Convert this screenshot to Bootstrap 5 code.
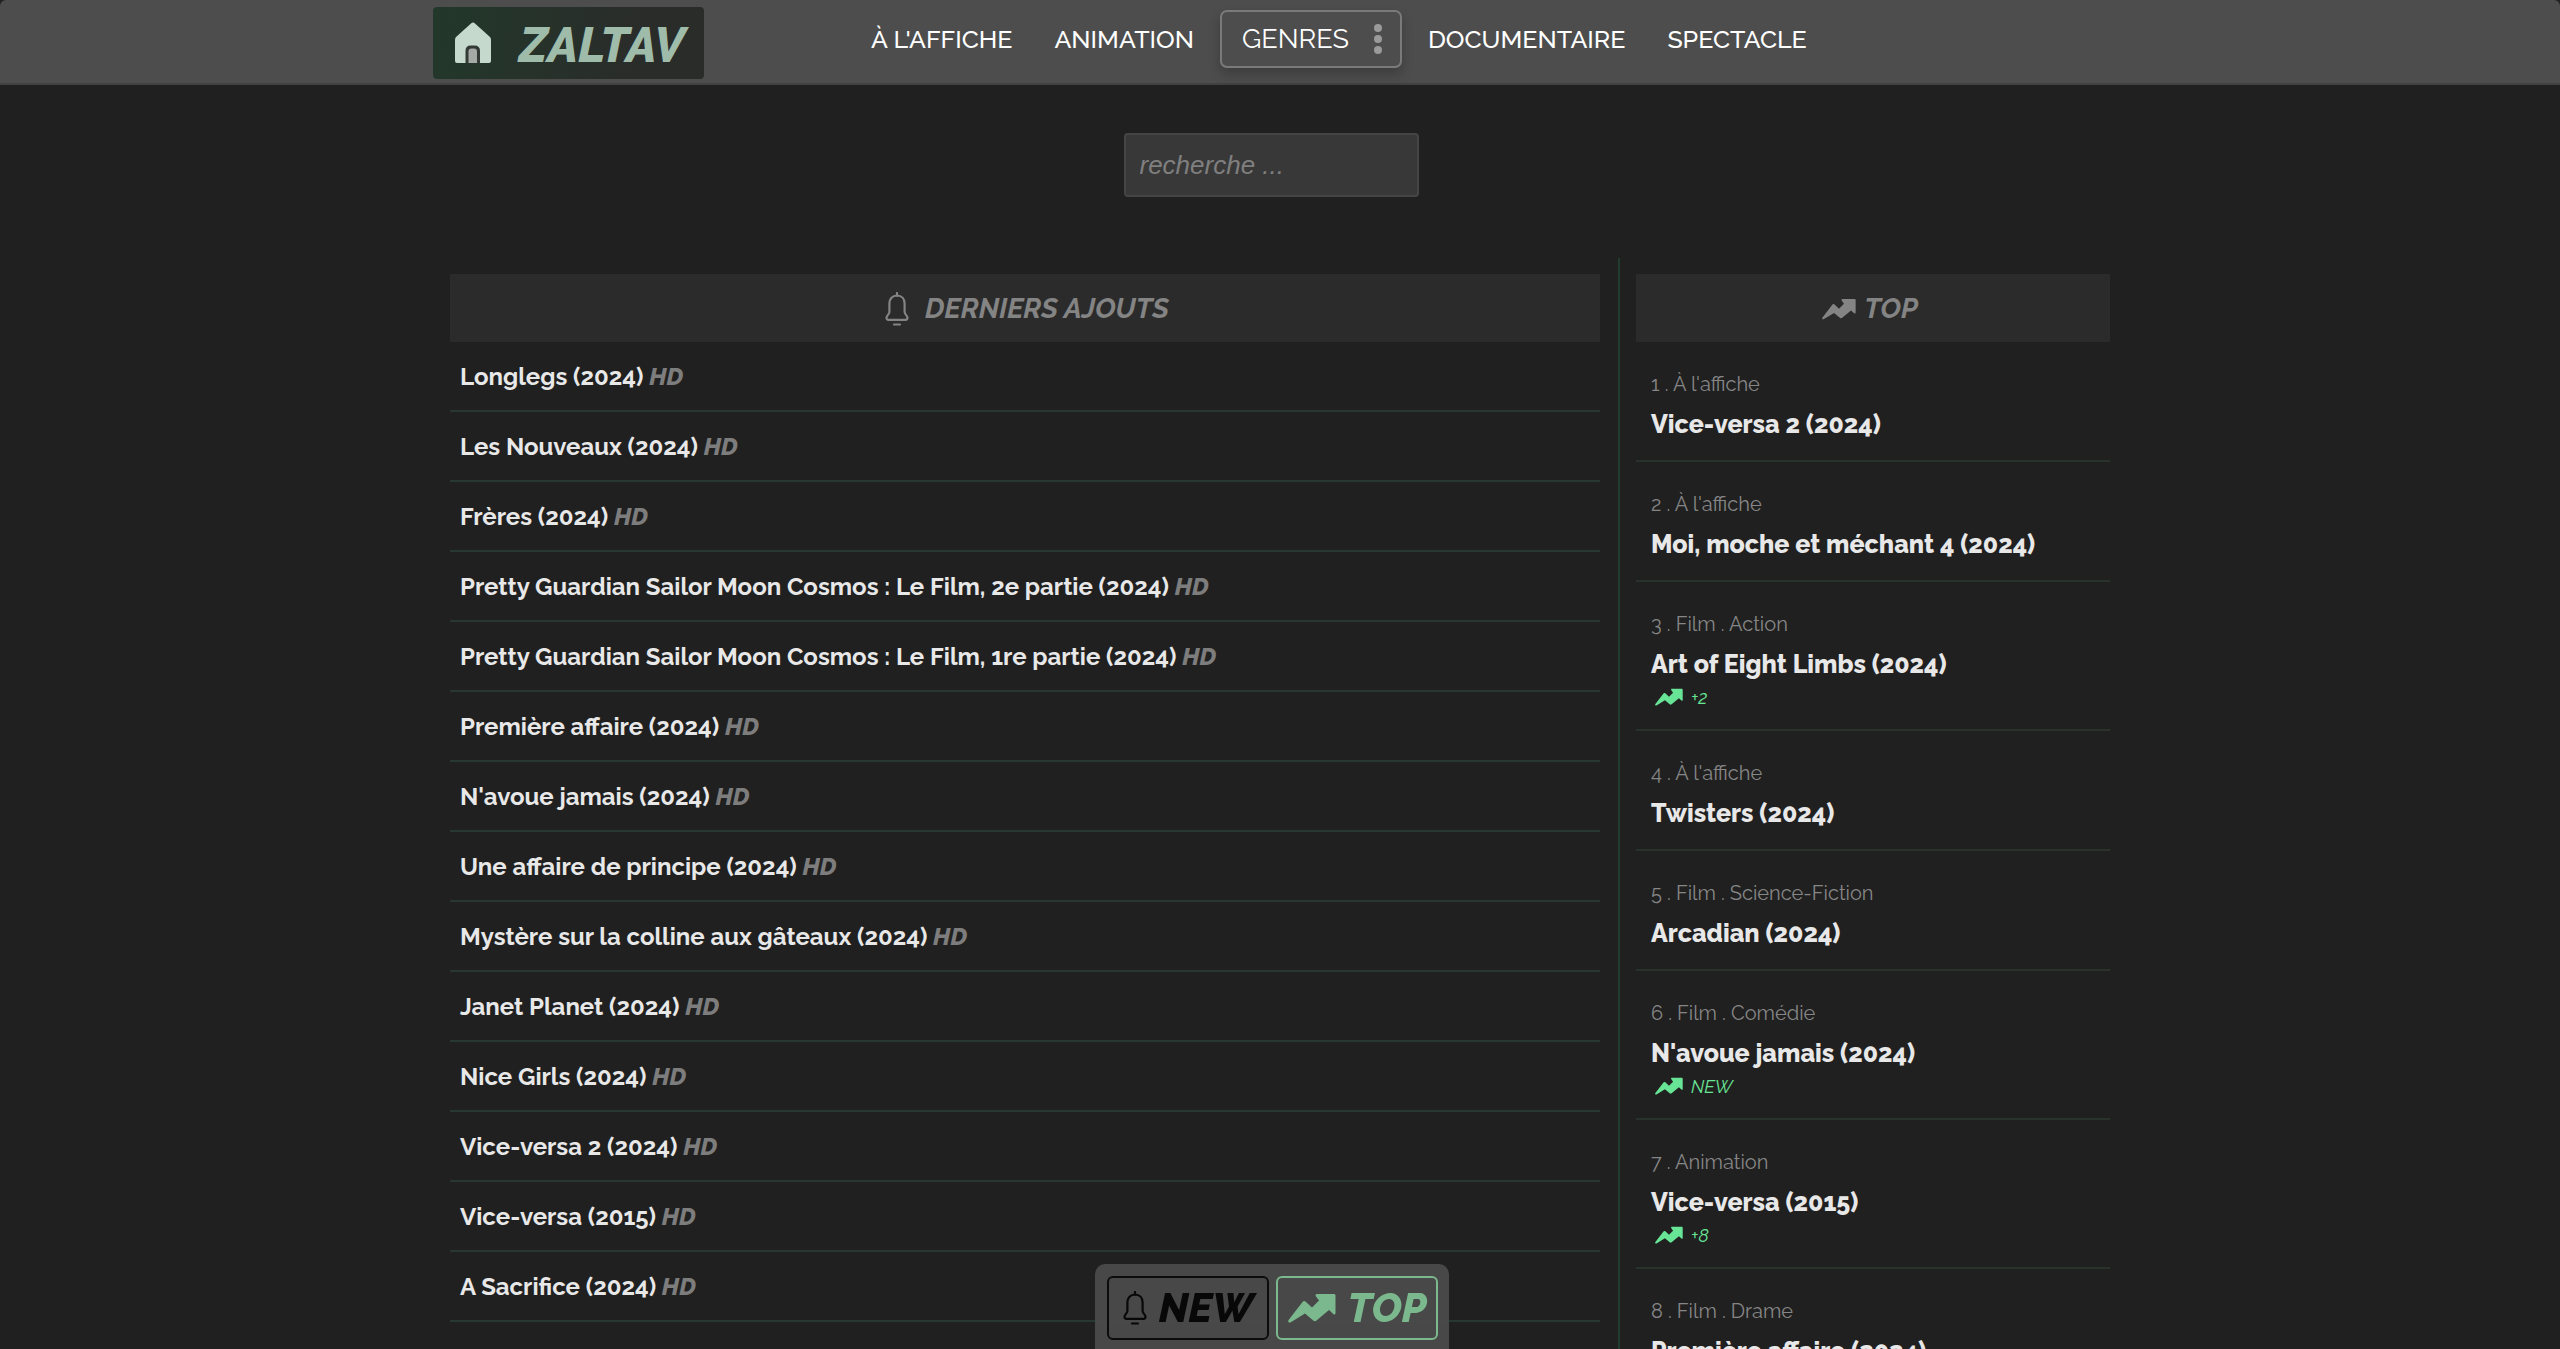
<!DOCTYPE html>
<html lang="fr">
<head>
<meta charset="utf-8">
<meta name="viewport" content="width=device-width, initial-scale=1">
<title>Zaltav</title>
<link href="https://cdn.jsdelivr.net/npm/bootstrap@5.3.0/dist/css/bootstrap.min.css" rel="stylesheet">
<style>
  body { background: #202020; color: #e8e8e8; font-family: Raleway, Lato, "Open Sans", sans-serif; font-variant-numeric: oldstyle-nums; }
  a { color: inherit; text-decoration: none; }
  .wrap { max-width: 1700px; }
  .topbar { background: #4d4d4d; height: 85px; border-bottom: 2px solid #414141; border-radius: 6px 6px 0 0; }
  .logo { width: 271px; height: 72px; margin: 7px 0 0 3px; padding-left: 22px; gap: 28px; border-radius: 4px; background: linear-gradient(100deg, #22382a, #2a2c2a 75%); color: #9fbcab; font-size: 48px; font-weight: 800; font-style: italic; line-height: 68px; }
  .logo span { padding-top: 4px; }
  .menu { gap: 42px; margin-left: 167px; font-size: 25px; font-weight: 500; line-height: 32px; color: #fff; padding-top: 10px; }
  .genres { width: 182px; height: 58px; margin: 0 -16px; padding: 0 18px 0 20px; border: 2px solid #7a7a7a; border-radius: 7px; background: transparent; color: #fff; font-size: 27px; box-shadow: 0 6px 12px rgba(0,0,0,.22); }
  .search { width: 295px; height: 64px; padding: 0 14px; border: 2px solid #454545; border-radius: 4px; background: #383838; color: #ddd; font: italic 26px "Liberation Sans", sans-serif; }
  .search::placeholder { color: #7f7f7f; opacity: 1; }
  .searchline { padding: 48px 18px 61px 0; }
  .latest { width: 70%; padding: 16px 18px 0 20px; border-right: 2px solid #213b2e; }
  .ranking { width: 30%; padding: 16px 20px 0 16px; }
  .heading { height: 68px; margin: 0; padding: 2px 2px 0 6px; background: #2b2b2b; color: #848484; font-size: 28px; font-weight: 700; font-style: italic; }
  .ranking .heading { padding: 2px 6px 0 0; }
  .films li { height: 70px; padding: 0 10px; border-bottom: 2px solid #26382f; font-size: 24px; font-weight: 700; line-height: 69px; white-space: nowrap; }
  .films i { color: #7d7d7d; font-weight: 800; }
  .tops li { padding: 28px 15px 15px; border-bottom: 2px solid #29332b; }
  .rank { color: #868686; font-size: 20px; line-height: 28px; }
  .name { margin-top: 5px; font-size: 25px; font-weight: 800; line-height: 42px; }
  .trend { gap: 8px; margin-top: -1px; padding-left: 4px; height: 30px; color: #67e495; font-size: 18px; font-style: italic; }
  .dock { width: 354px; height: 85px; padding: 12px 11px 0 12px; border-radius: 10px 10px 0 0; background: rgba(77,77,77,.9); }
  .pick { width: 162px; height: 64px; padding: 0; border: 2px solid #0c0c0c; border-radius: 6px; background: transparent; color: #080808; font-size: 41px; font-weight: 800; font-style: italic; line-height: 60px; gap: 12px; }
  .pick.on { border-color: #7cb88d; color: #7cb88d; }
</style>
</head>
<body class="overflow-hidden">
<svg width="0" height="0" class="position-absolute" aria-hidden="true">
  <symbol id="bell" viewBox="0 0 24 34"><path d="M12 1v3M12 3.500c-4.600 0-7.600 3.300-7.600 8v8.500c0 2.200-2.900 3.500-2.900 5.800 0 1.200.8 2 2 2h17c1.200 0 2-.8 2-2 0-2.300-2.900-3.600-2.900-5.800v-8.500c0-4.700-3-8-7.600-8zM9 32.500h6" fill="none" stroke="currentColor" stroke-width="2.200" stroke-linecap="round"/></symbol>
  <symbol id="rise" viewBox="0 0 48 30"><path d="M1 29.500C0 29 0 27.500 1 26.500L14.500 9c1-1.200 2-1.200 3.200-.3L24 14.500 31 7.500 28 3.500C27 2 27.500 1 29 1H46.500L47.500 2V20C47.500 21.500 46.500 22 45.300 21L41 17 28.500 27.500c-1 .9-2.300.9-3.300-.1L17 20.500 4 28.500C2.500 29.500 1.800 29.900 1 29.500z" fill="currentColor"/></symbol>
</svg>

<header class="topbar">
  <div class="wrap mx-auto d-flex align-items-start">
    <a class="logo d-flex align-items-center" href="#">
      <svg width="36" height="42" viewBox="0 0 36 42" aria-hidden="true"><path d="M16 1.500q2-2 4 0L35 15q1 1 1 3V39q0 2-2 2H2q-2 0-2-2V18q0-2 1-3z" fill="#c5dacd"/><path d="M10.500 41V29q0-5.500 5-5.500h4q5.500 0 5.500 5.500v12z" fill="#343a36"/><path d="M13.500 41V29.500q0-3 3-3h2.500q3 0 3 3V41z" fill="#a6aaa7"/></svg>
      <span>ZALTAV</span>
    </a>
    <nav class="menu d-flex align-items-center" aria-label="Menu principal">
      <a href="#">À L'AFFICHE</a>
      <a href="#">ANIMATION</a>
      <button class="genres d-flex align-items-center justify-content-between" type="button">GENRES
        <svg width="8" height="30" viewBox="0 0 8 30" fill="#9a9a9a" aria-hidden="true"><circle cx="4" cy="4" r="4"/><circle cx="4" cy="15" r="4"/><circle cx="4" cy="26" r="4"/></svg>
      </button>
      <a href="#">DOCUMENTAIRE</a>
      <a href="#">SPECTACLE</a>
    </nav>
  </div>
</header>

<main class="wrap mx-auto">
  <form class="searchline d-flex justify-content-center">
    <input class="search" type="search" placeholder="recherche ..." aria-label="recherche">
  </form>
  <div class="d-flex">
    <section class="latest">
      <h2 class="heading d-flex align-items-center justify-content-center gap-3"><svg width="24" height="34" aria-hidden="true"><use href="#bell"/></svg>DERNIERS AJOUTS</h2>
      <ul class="films list-unstyled mb-0">
        <li><a href="#">Longlegs (2024) <i>HD</i></a></li>
        <li><a href="#">Les Nouveaux (2024) <i>HD</i></a></li>
        <li><a href="#">Frères (2024) <i>HD</i></a></li>
        <li><a href="#">Pretty Guardian Sailor Moon Cosmos : Le Film, 2e partie (2024) <i>HD</i></a></li>
        <li><a href="#">Pretty Guardian Sailor Moon Cosmos : Le Film, 1re partie (2024) <i>HD</i></a></li>
        <li><a href="#">Première affaire (2024) <i>HD</i></a></li>
        <li><a href="#">N'avoue jamais (2024) <i>HD</i></a></li>
        <li><a href="#">Une affaire de principe (2024) <i>HD</i></a></li>
        <li><a href="#">Mystère sur la colline aux gâteaux (2024) <i>HD</i></a></li>
        <li><a href="#">Janet Planet (2024) <i>HD</i></a></li>
        <li><a href="#">Nice Girls (2024) <i>HD</i></a></li>
        <li><a href="#">Vice-versa 2 (2024) <i>HD</i></a></li>
        <li><a href="#">Vice-versa (2015) <i>HD</i></a></li>
        <li><a href="#">A Sacrifice (2024) <i>HD</i></a></li>
      </ul>
    </section>
    <section class="ranking">
      <h2 class="heading d-flex align-items-center justify-content-center gap-2"><svg width="34" height="22" aria-hidden="true"><use href="#rise"/></svg>TOP</h2>
      <ol class="tops list-unstyled mb-0">
        <li><div class="rank">1 . À l'affiche</div><a class="name d-block" href="#">Vice-versa 2 (2024)</a></li>
        <li><div class="rank">2 . À l'affiche</div><a class="name d-block" href="#">Moi, moche et méchant 4 (2024)</a></li>
        <li><div class="rank">3 . Film . Action</div><a class="name d-block" href="#">Art of Eight Limbs (2024)</a><div class="trend d-flex"><svg width="28" height="18" class="mt-1" aria-hidden="true"><use href="#rise"/></svg>+2</div></li>
        <li><div class="rank">4 . À l'affiche</div><a class="name d-block" href="#">Twisters (2024)</a></li>
        <li><div class="rank">5 . Film . Science-Fiction</div><a class="name d-block" href="#">Arcadian (2024)</a></li>
        <li><div class="rank">6 . Film . Comédie</div><a class="name d-block" href="#">N'avoue jamais (2024)</a><div class="trend d-flex"><svg width="28" height="18" class="mt-1" aria-hidden="true"><use href="#rise"/></svg>NEW</div></li>
        <li><div class="rank">7 . Animation</div><a class="name d-block" href="#">Vice-versa (2015)</a><div class="trend d-flex"><svg width="28" height="18" class="mt-1" aria-hidden="true"><use href="#rise"/></svg>+8</div></li>
        <li><div class="rank">8 . Film . Drame</div><a class="name d-block" href="#">Première affaire (2024)</a></li>
      </ol>
    </section>
  </div>
</main>

<div class="fixed-bottom d-flex justify-content-center pe-3">
  <div class="dock d-flex justify-content-between">
    <button class="pick d-flex align-items-center justify-content-center" type="button"><svg width="24" height="34" aria-hidden="true"><use href="#bell"/></svg>NEW</button>
    <button class="pick on d-flex align-items-center justify-content-center" type="button"><svg width="48" height="30" aria-hidden="true"><use href="#rise"/></svg>TOP</button>
  </div>
</div>
<script src="https://cdn.jsdelivr.net/npm/bootstrap@5.3.0/dist/js/bootstrap.bundle.min.js"></script>
</body>
</html>
